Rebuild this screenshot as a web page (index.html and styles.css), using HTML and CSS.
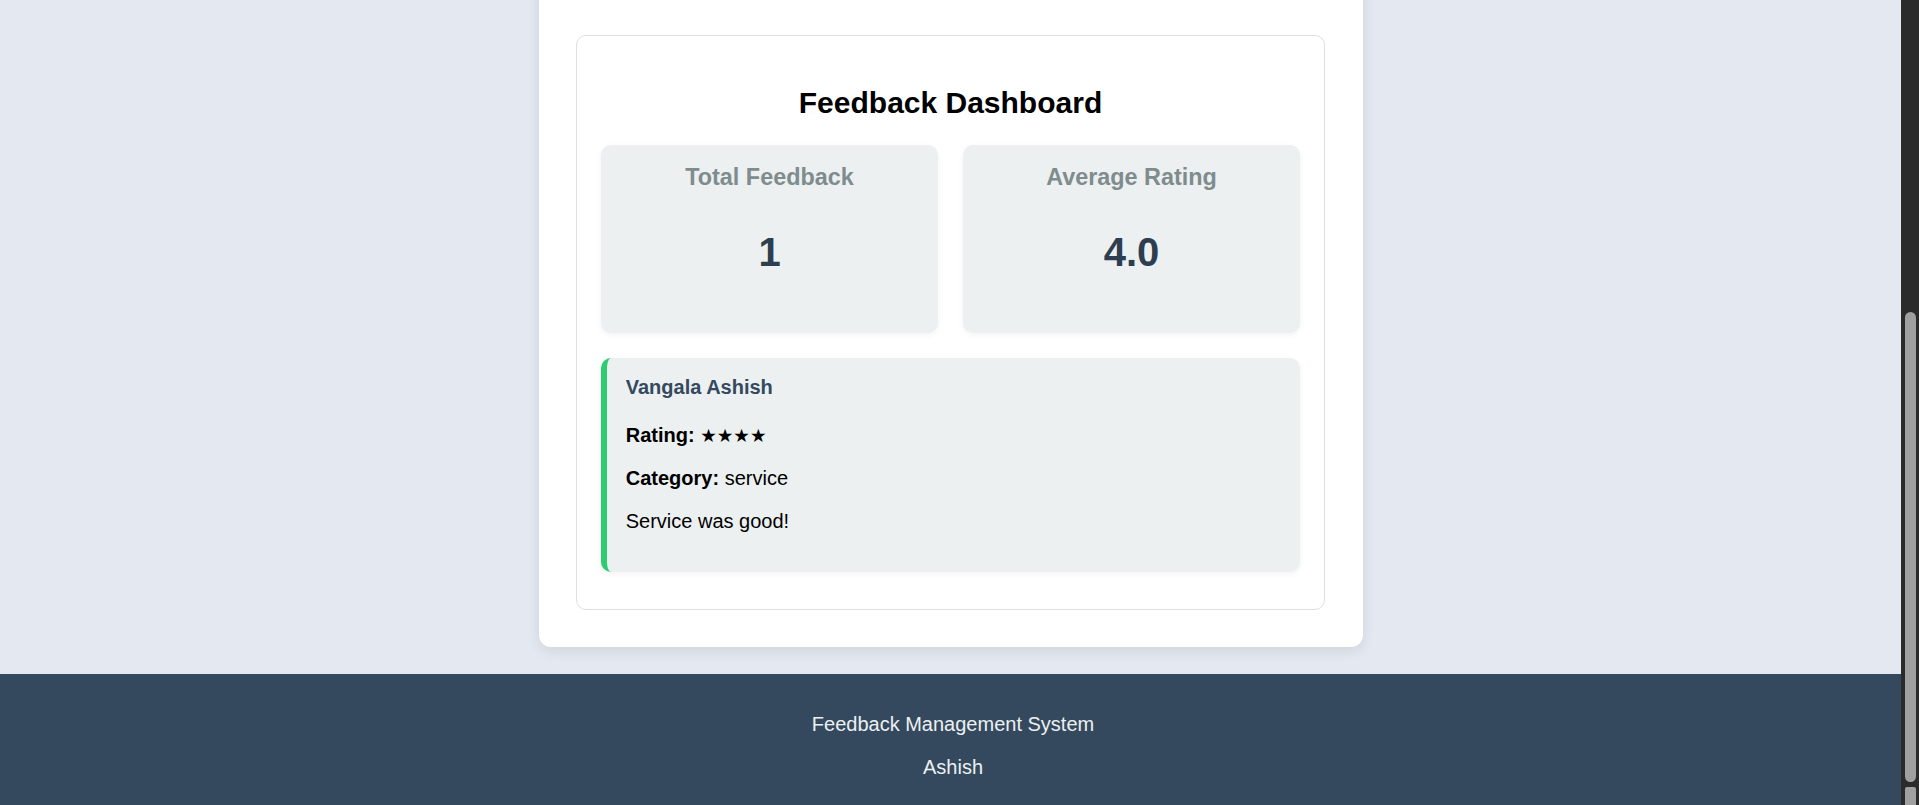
FILE: index.html
```html
<!DOCTYPE html>
<html lang="en">
<head>
<meta charset="utf-8">
<title>Feedback Dashboard</title>
<link rel="stylesheet" href="styles.css">
</head>
<body>
  <div class="viewport">
    <main class="main">
      <div class="container">
        <section class="dashboard">
          <h2 class="title">Feedback Dashboard</h2>
          <div class="stats">
            <div class="stat-card">
              <h3 class="stat-label">Total Feedback</h3>
              <p class="stat-value">1</p>
            </div>
            <div class="stat-card">
              <h3 class="stat-label">Average Rating</h3>
              <p class="stat-value">4.0</p>
            </div>
          </div>
          <div class="feedback-item">
            <h4 class="feedback-name">Vangala Ashish</h4>
            <p class="feedback-line"><strong>Rating:</strong> <span class="stars">★★★★</span></p>
            <p class="feedback-line"><strong>Category:</strong> service</p>
            <p class="feedback-line">Service was good!</p>
          </div>
        </section>
      </div>
    </main>
    <footer class="footer">
      <p class="footer-line">Feedback Management System</p>
      <p class="footer-line">Ashish</p>
    </footer>
  </div>
  <div class="scrollbar">
    <div class="scroll-thumb"></div>
    <div class="scroll-arrow"></div>
  </div>
</body>
</html>
```

FILE: styles.css
```css
* {
  box-sizing: border-box;
}

html, body {
  margin: 0;
  padding: 0;
}

body {
  display: flex;
  height: 805px;
  overflow: hidden;
  background: #e4e8f1;
  font-family: "Liberation Sans", Arial, sans-serif;
  font-size: 20px;
  color: #000;
}

.viewport {
  flex: 1;
  display: flex;
  flex-direction: column;
  min-width: 0;
}

.main {
  display: flex;
  justify-content: center;
  padding-bottom: 26.5px;
}

.container {
  width: 824px;
  margin-top: -40px;
  padding: 75px 37.5px 37.5px;
  background: #fff;
  border-radius: 12px;
  box-shadow: 0 4px 14px rgba(0, 0, 0, 0.09);
}

.dashboard {
  border: 1px solid #dcdfe3;
  border-radius: 10px;
  padding: 25px 24px 36.5px;
}

.title {
  margin: 25px 0;
  font-size: 30px;
  font-weight: bold;
  text-align: center;
  color: #000;
  line-height: normal;
}

.stats {
  display: grid;
  grid-template-columns: 1fr 1fr;
  gap: 25px;
  margin-bottom: 25px;
}

.stat-card {
  background: #ecf0f1;
  border-radius: 10px;
  padding: 18.75px;
  text-align: center;
  box-shadow: 0 2px 6px rgba(0, 0, 0, 0.05);
}

.stat-label {
  margin: 0;
  font-size: 23.4px;
  font-weight: bold;
  color: #7f8c8d;
  line-height: normal;
}

.stat-value {
  margin: 39px 0;
  font-size: 40px;
  font-weight: bold;
  color: #2c3e50;
  line-height: normal;
}

.feedback-item {
  background: #ecf0f1;
  border-left: 6px solid #2ecc71;
  border-radius: 10px;
  padding: 18.75px;
  box-shadow: 0 2px 6px rgba(0, 0, 0, 0.05);
}

.feedback-name {
  margin: 0 0 25px;
  font-size: 20px;
  font-weight: bold;
  color: #34495e;
  line-height: normal;
}

.feedback-line {
  margin: 20px 0;
  line-height: normal;
}

.feedback-name + .feedback-line {
  margin-top: 0;
}

.stars {
  font-family: "DejaVu Sans", sans-serif;
  font-size: 18.5px;
}

.footer {
  flex: 1;
  background: #34495e;
  color: #ecf0f1;
  text-align: center;
  padding: 19.5px 0 19px 5px;
}

.footer-line {
  margin: 20px 0;
  line-height: 23px;
}

.scrollbar {
  width: 18px;
  flex: none;
  background: #2b2b2b;
  display: flex;
  flex-direction: column;
  align-items: center;
  padding-top: 312px;
}

.scroll-thumb {
  width: 11px;
  height: 480px;
  border-radius: 6px;
  background: #a0a0a0;
}

.scroll-arrow {
  margin-top: 5px;
  width: 11px;
  height: 18px;
  border-radius: 2px 2px 0 0;
  background: #a0a0a0;
}
```
